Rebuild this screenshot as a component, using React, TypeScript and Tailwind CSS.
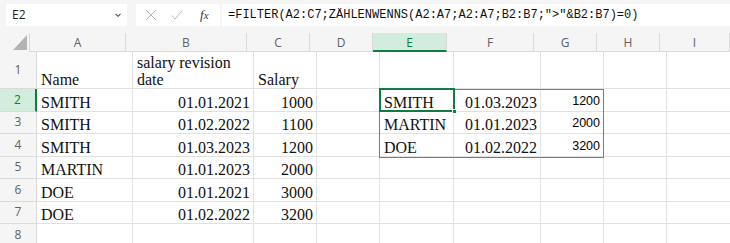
import React from "react";

const cols = [
  { k: "A", w: 96 },
  { k: "B", w: 121 },
  { k: "C", w: 63 },
  { k: "D", w: 63 },
  { k: "E", w: 74 },
  { k: "F", w: 87 },
  { k: "G", w: 63 },
  { k: "H", w: 63 },
  { k: "I", w: 70 },
];

type Cell = { t: string; r?: boolean; sans?: boolean };

const data: Record<number, Record<string, Cell>> = {
  1: { A: { t: "Name" }, B: { t: "salary revision\ndate" }, C: { t: "Salary" } },
  2: { A: { t: "SMITH" }, B: { t: "01.01.2021", r: true }, C: { t: "1000", r: true }, E: { t: "SMITH" }, F: { t: "01.03.2023", r: true }, G: { t: "1200", r: true, sans: true } },
  3: { A: { t: "SMITH" }, B: { t: "01.02.2022", r: true }, C: { t: "1100", r: true }, E: { t: "MARTIN" }, F: { t: "01.01.2023", r: true }, G: { t: "2000", r: true, sans: true } },
  4: { A: { t: "SMITH" }, B: { t: "01.03.2023", r: true }, C: { t: "1200", r: true }, E: { t: "DOE" }, F: { t: "01.02.2022", r: true }, G: { t: "3200", r: true, sans: true } },
  5: { A: { t: "MARTIN" }, B: { t: "01.01.2023", r: true }, C: { t: "2000", r: true } },
  6: { A: { t: "DOE" }, B: { t: "01.01.2021", r: true }, C: { t: "3000", r: true } },
  7: { A: { t: "DOE" }, B: { t: "01.02.2022", r: true }, C: { t: "3200", r: true } },
  8: {},
};

const rowH: Record<number, number> = { 1: 37, 2: 22.5, 3: 22.5, 4: 22.5, 5: 22.5, 6: 22.5, 7: 22.5, 8: 22.5 };

const ui = { fontFamily: '"Open Sans", "Noto Sans", sans-serif' };
const serif = { fontFamily: '"Liberation Serif", serif' };
const sans = { fontFamily: '"Liberation Sans", Arial, sans-serif' };
const mono = { fontFamily: '"Liberation Mono", "DejaVu Sans Mono", monospace' };

export default function App() {
  return (
    <div className="w-[730px] h-[243px] overflow-hidden bg-[#f5f5f5] relative">
      {/* toolbar */}
      <div className="flex items-start h-[33px] pt-[4px]">
        <div className="ml-[6px] w-[121px] h-[22px] bg-white flex items-center justify-between pl-[6px] pr-[4px] text-[12px] text-[#222]" style={ui}>
          <span>E2</span>
          <svg width="10" height="10" viewBox="0 0 10 10"><path d="M2.5 3.8 L5 6.3 L7.5 3.8" fill="none" stroke="#444" strokeWidth="1.1" /></svg>
        </div>
        <div className="ml-[9px] w-[84px] h-[22px] bg-white flex items-center">
          <svg className="ml-[8px]" width="14" height="14" viewBox="0 0 14 14"><path d="M2 2 L12 12 M12 2 L2 12" stroke="#b8b8b8" strokeWidth="1" fill="none" /></svg>
          <svg className="ml-[12px]" width="14" height="14" viewBox="0 0 14 14"><path d="M1.5 7.5 L5 11 L12.5 2.5" stroke="#b8b8b8" strokeWidth="1" fill="none" /></svg>
          <span className="ml-[16px] text-[13px] italic text-[#333]" style={serif}>f<span className="text-[11px]">x</span></span>
        </div>
        <div className="ml-[2px] flex-1 h-[22px] bg-white flex items-center pl-[6px] text-[12px] text-[#111] whitespace-nowrap" style={mono}>
          =FILTER(A2:C7;ZÄHLENWENNS(A2:A7;A2:A7;B2:B7;"&gt;"&amp;B2:B7)=0)
        </div>
      </div>
      {/* header row */}
      <div className="flex h-[19px]">
        <div className="w-[37px] h-full flex items-end justify-end pr-[2px] pb-[2px] border-r border-[#dadada]">
          <svg width="14" height="15" viewBox="0 0 14 15"><path d="M14 0 L14 15 L0 15 Z" fill="#b3b3b3" /></svg>
        </div>
        {cols.map((c) => {
          const sel = c.k === "E";
          return (
            <div
              key={c.k}
              className={
                "h-full shrink-0 flex items-center justify-center pt-[2px] text-[12px] " +
                (sel ? "bg-[#d2ecdd] text-[#107c41] border-b-2 border-[#107c41] border-r border-r-[#dadada]" : "text-[#616161] border-r border-[#dadada] border-b border-b-[#dadada]")
              }
              style={{ ...ui, width: c.w }}
            >
              {c.k}
            </div>
          );
        })}
      </div>
      {/* rows */}
      <div className="relative">
        {Object.keys(data).map((rk) => {
          const r = Number(rk);
          const sel = r === 2;
          return (
            <div key={r} className="flex" style={{ height: rowH[r] }}>
              <div
                className={
                  "w-[37px] shrink-0 flex items-center justify-center text-[12px] border-b border-[#dadada] " +
                  (sel ? "bg-[#d2ecdd] text-[#107c41] border-r-2 border-r-[#107c41]" : "text-[#616161] border-r border-r-[#dadada]")
                }
                style={ui}
              >
                {r}
              </div>
              {cols.map((c) => {
                const cell = data[r][c.k];
                return (
                  <div
                    key={c.k}
                    className={
                      "shrink-0 bg-white border-r border-b border-[#e1e1e1] flex items-end overflow-visible whitespace-pre leading-[17px] " +
                      (cell?.r ? "justify-end pr-[3px] " : "justify-start pl-[4px] ") +
                      (cell?.sans ? "text-[12.5px] pb-[1px] text-black" : "text-[16px] pb-0 text-[#111]")
                    }
                    style={{ width: c.w, ...(cell?.sans ? sans : serif) }}
                  >
                    {cell?.t ?? ""}
                  </div>
                );
              })}
            </div>
          );
        })}
        {/* blue range E2:G4 */}
        <div className="absolute left-[379px] top-[37px] w-[225px] h-[68.5px] border border-[#4f7fd6] pointer-events-none" />
        {/* active cell E2 */}
        <div className="absolute left-[379px] top-[36px] w-[76px] h-[24px] border-2 border-[#107c41] pointer-events-none" />
        <div className="absolute left-[452px] top-[57px] w-[5px] h-[5px] bg-[#107c41] border border-white pointer-events-none" />
      </div>
    </div>
  );
}
